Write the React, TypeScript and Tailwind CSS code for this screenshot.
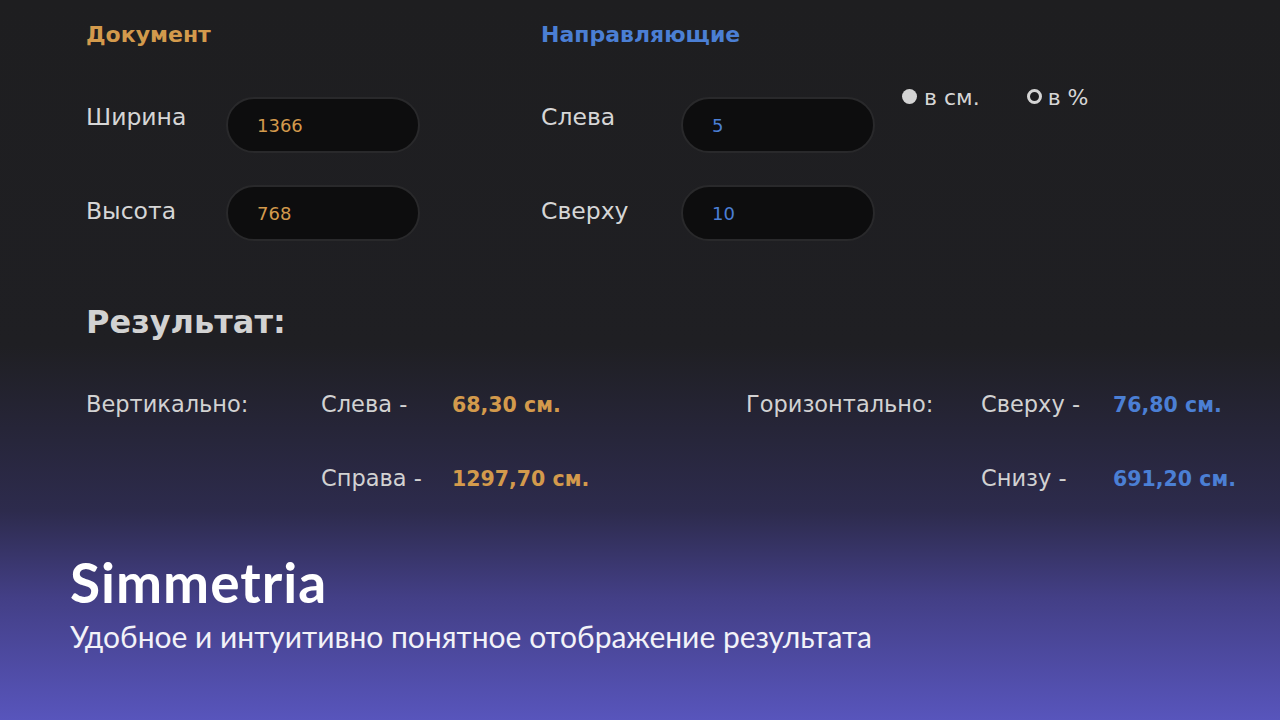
import React from 'react';

const app = { fontFamily: '"DejaVu Sans", "Open Sans", sans-serif' };
const brand = { fontFamily: 'Lato, "Open Sans", sans-serif' };

function Field({ label, value, tone, raised }: { label: string; value: string; tone: 'orange' | 'blue'; raised?: boolean }) {
  return (
    <div className="flex items-center">
      <span className={`w-[140px] text-[23.5px] text-[#d6d6d6] ${raised ? 'mb-[14px]' : 'mb-[2px]'}`}>{label}</span>
      <div className="w-[194px] h-[56px] rounded-full bg-[#0d0d0e] border-2 border-[#29292b] flex items-center pl-[29px]">
        <span className={`text-[18px] ${tone === 'orange' ? 'text-[#d39a4c]' : 'text-[#4b7fd4]'}`}>{value}</span>
      </div>
    </div>
  );
}

function ResultRow({ a, b, c, d, e, f }: { a: string; b: string; c: string; d: string; e: string; f: string }) {
  return (
    <div className="grid grid-cols-[235px_131px_294px_235px_132px_1fr] items-center h-[32px] text-[22.5px] text-[#d2d2d2]">
      <span>{a}</span>
      <span>{b}</span>
      <span className="font-bold text-[20.5px] text-[#d39a4c]">{c}</span>
      <span>{d}</span>
      <span>{e}</span>
      <span className="font-bold text-[20.5px] text-[#4b7fd4]">{f}</span>
    </div>
  );
}

export default function App() {
  return (
    <div className="w-[1280px] h-[720px] overflow-hidden bg-[linear-gradient(180deg,#1e1e20_0%,#1f1f23_48%,#2d2b4d_71%,#433f86_83%,#5855bc_100%)]">
      <div className="pl-[86px] pt-[21px]" style={app}>
        <div className="flex">
          {/* document */}
          <div className="w-[455px]">
            <h2 className="text-[22px] leading-[28px] font-bold text-[#d39a4c]">Документ</h2>
            <div className="mt-[48px] flex flex-col gap-[32px]">
              <Field label="Ширина" value="1366" tone="orange" raised />
              <Field label="Высота" value="768" tone="orange" />
            </div>
          </div>
          {/* guides */}
          <div className="flex">
            <div>
              <h2 className="text-[22px] leading-[28px] font-bold text-[#4b7fd4]">Направляющие</h2>
              <div className="mt-[48px] flex flex-col gap-[32px]">
                <Field label="Слева" value="5" tone="blue" raised />
                <Field label="Сверху" value="10" tone="blue" />
              </div>
            </div>
            <div className="ml-[27px] mt-[60px] flex items-start gap-[47px] text-[22px] text-[#d6d6d6] h-[28px]">
              <label className="flex items-center gap-[7px]">
                <span className="w-[15px] h-[15px] rounded-full bg-[#d4d4d4] mb-[3px]" />
                <span>в см.</span>
              </label>
              <label className="flex items-center gap-[6px]">
                <span className="w-[15px] h-[15px] rounded-full border-[3px] border-[#d4d4d4] mb-[3px]" />
                <span>в %</span>
              </label>
            </div>
          </div>
        </div>

        <h1 className="mt-[63px] text-[32px] leading-[36px] font-bold text-[#d2d2d2]">Результат:</h1>

        <div className="mt-[48px] flex flex-col gap-[42px]">
          <ResultRow a="Вертикально:" b="Слева -" c="68,30 см." d="Горизонтально:" e="Сверху -" f="76,80 см." />
          <ResultRow a="" b="Справа -" c="1297,70 см." d="" e="Снизу -" f="691,20 см." />
        </div>
      </div>

      <div className="pl-[70px] mt-[58px] text-white" style={brand}>
        <div className="text-[55px] leading-[60px] font-bold tracking-[1px]">Simmetria</div>
        <div className="mt-[6px] text-[30px] leading-[36px] text-[#f2f2f8]">
          Удобное и интуитивно понятное отображение результата
        </div>
      </div>
    </div>
  );
}
